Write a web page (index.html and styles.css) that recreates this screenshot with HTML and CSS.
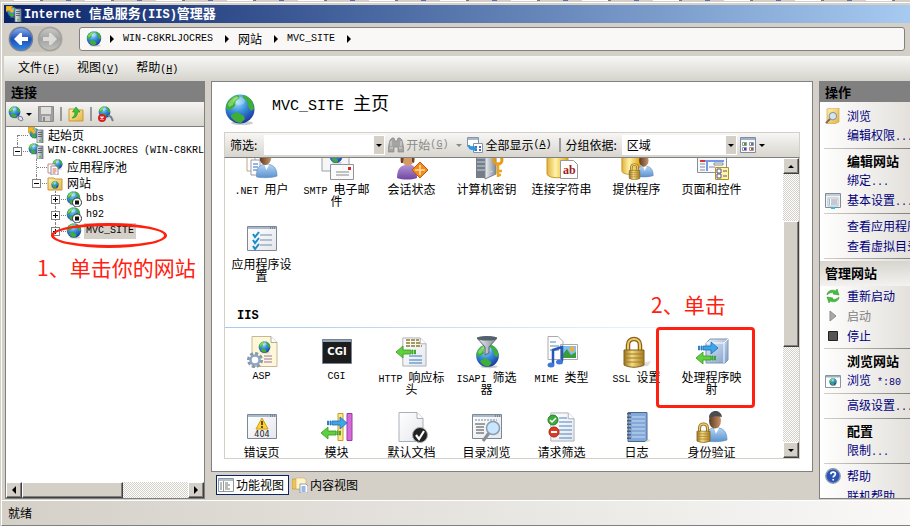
FILE: index.html
```html
<!DOCTYPE html>
<html lang="zh-CN">

<head>
    <meta charset="UTF-8">
    <meta name="viewport" content="width=device-width, initial-scale=1.0">
    <link rel="stylesheet" href="styles.css">
    <title>Internet 信息服务(IIS)管理器</title>
</head>

<body>
    <!-- shared icon shapes -->
    <svg class="sprite" width="0" height="0" aria-hidden="true">
        <defs>
            <radialGradient id="gSea" cx=".4" cy=".25" r=".8">
                <stop offset="0" stop-color="#a5e4ff"/><stop offset=".45" stop-color="#3a8fdc"/><stop offset="1" stop-color="#162f9c"/>
            </radialGradient>
            <linearGradient id="gBack" x2="0" y2="1">
                <stop offset="0" stop-color="#8cb4ee"/><stop offset=".5" stop-color="#1c4db8"/><stop offset="1" stop-color="#2f8ae8"/>
            </linearGradient>
            <linearGradient id="gFwd" x2="0" y2="1">
                <stop offset="0" stop-color="#c9c9c7"/><stop offset=".5" stop-color="#a2a2a0"/><stop offset="1" stop-color="#c2c2c0"/>
            </linearGradient>
            <linearGradient id="gGold"><stop offset="0" stop-color="#e0b040"/><stop offset=".4" stop-color="#fff3a8"/><stop offset="1" stop-color="#e3a412"/></linearGradient>
            <linearGradient id="gFolder" x2="1" y2="1"><stop offset="0" stop-color="#fff0b0"/><stop offset="1" stop-color="#e6b445"/></linearGradient>
            <linearGradient id="gBrass"><stop offset="0" stop-color="#9a7018"/><stop offset=".4" stop-color="#f3dc84"/><stop offset="1" stop-color="#a87a1c"/></linearGradient>
            <linearGradient id="gSteel"><stop offset="0" stop-color="#f2f4f6"/><stop offset="1" stop-color="#7d8894"/></linearGradient>
            <linearGradient id="gBox" x2="1" y2="1"><stop offset="0" stop-color="#e6eef8"/><stop offset="1" stop-color="#7fa0cc"/></linearGradient>
            <linearGradient id="gShirt" x2="0" y2="1"><stop offset="0" stop-color="#b5d5f5"/><stop offset="1" stop-color="#5c92cf"/></linearGradient>
            <linearGradient id="gPurple" x2="0" y2="1"><stop offset="0" stop-color="#b393d8"/><stop offset="1" stop-color="#7046a0"/></linearGradient>
            <linearGradient id="gFace"><stop offset="0" stop-color="#5c3a22"/><stop offset="1" stop-color="#c89468"/></linearGradient>
            <linearGradient id="gPage" x2="1" y2="1"><stop offset="0" stop-color="#fff"/><stop offset="1" stop-color="#e4e7ec"/></linearGradient>
        </defs>
        <symbol id="globe" viewBox="0 0 32 32">
            <ellipse cx="18" cy="29" rx="11" ry="2" fill="#999" opacity=".5"/>
            <circle cx="16" cy="15" r="14.5" fill="url(#gSea)"/>
            <path d="M2 13C3 7 8 2 14 1l2 3-4 3-1 5-5 4-3-1zM19 1c5 1 8 4 10 8l1 6-3 2-3-5-1-5-4-3zM7 21l6-3 7 4 1 3-4 4c-4 0-8-3-10-6z" fill="#3fae35"/>
            <path d="M4 10c2-4 5-7 9-8l1 2-4 3-1 4-4 2z" fill="#8fdc6a" opacity=".8"/>
            <ellipse cx="15" cy="7" rx="6" ry="4" fill="#fff" opacity=".25"/>
        </symbol>
        <symbol id="server" viewBox="0 0 16 16">
            <path d="M9 3h6v13H9z" fill="url(#gSteel)" stroke="#6d7680" stroke-width=".8"/>
            <path d="M10 5.5h4M10 7.5h4M10 9.5h4" stroke="#56606a" stroke-width=".9"/>
            <path d="M11 13h2v1.5h-2z" fill="#4fc22e"/>
        </symbol>
        <symbol id="start" viewBox="0 0 16 16">
            <use href="#globe" x="1" y="1" width="11" height="11"/>
            <path d="M0 0h7l-2 2 3 3-2 2-3-3-3 2z" fill="#f6b82a" stroke="#c78710" stroke-width=".5"/>
            <use href="#server"/>
        </symbol>
        <symbol id="host" viewBox="0 0 16 16"><use href="#globe" width="12" height="12"/><use href="#server"/></symbol>
        <symbol id="pool" viewBox="0 0 16 16">
            <use href="#globe" x="5" width="11" height="11"/>
            <path d="M1 5h7v9H1z" fill="#fff" stroke="#c58a8a"/><path d="M4 7h5l2 2v7H4z" fill="#fff" stroke="#8a919c"/>
            <path d="M5.500 10h4M5.500 12h4M5.500 14h3" stroke="#c33" stroke-width=".8"/>
        </symbol>
        <symbol id="folder" viewBox="0 0 16 16"><path d="M1 3h6l1 1h7v11H1z" fill="url(#gFolder)" stroke="#c79a38"/></symbol>
        <symbol id="sites" viewBox="0 0 16 16"><use href="#folder"/><use href="#globe" x="4" y="6" width="8" height="8"/></symbol>
        <symbol id="stopped" viewBox="0 0 16 16">
            <use href="#globe" width="15" height="15"/>
            <circle cx="11" cy="11.500" r="4.500" fill="#fff" stroke="#333"/><path d="M9 9.500h4v4H9z" fill="#111"/>
        </symbol>
        <symbol id="connect" viewBox="0 0 16 16">
            <use href="#globe" width="13" height="13"/>
            <path d="M8 9l3 3m0-2l3 1 1 3-2 1-3-2z" fill="#dfe6ee" stroke="#71818f"/>
        </symbol>
        <symbol id="disconnect" viewBox="0 0 16 16">
            <use href="#globe" width="13" height="13"/><path d="M10 9l3 2 2 4" fill="none" stroke="#71818f" stroke-width="2"/>
            <circle cx="4" cy="12" r="4" fill="#d22020"/><path d="M2.500 10.500l3 3m0-3l-3 3" stroke="#fff" stroke-width="1.300"/>
        </symbol>
        <symbol id="save" viewBox="0 0 16 16">
            <path d="M.5.5h15v15H.5z" fill="#a0a0a0" stroke="#8a8a8a"/><path d="M3 1h10v7H3z" fill="#e0dfdc"/>
            <path d="M4 10h8v5H4z" fill="#d0cfcb"/><path d="M5 11h2v4H5z" fill="#888"/>
        </symbol>
        <symbol id="folder-up" viewBox="0 0 16 16"><use href="#folder"/><path d="M4 12c2-1 3-3 3-6H4.500L8 1l4 5H9.500c0 4-2 6-5.500 6z" fill="#3cc23c" stroke="#1f8a1f" stroke-width=".6"/></symbol>
        <symbol id="glass" viewBox="0 0 16 16">
            <path d="M6 10l-5 5" stroke="#7a6a60" stroke-width="2.200"/><circle cx="9" cy="7" r="4.200" fill="#cfeaff" fill-opacity=".85" stroke="#8a97a5" stroke-width="1.200"/>
        </symbol>
        <symbol id="folder-find" viewBox="0 0 16 16"><path d="M2 1l5-1h7v14l-5 2H2z" fill="url(#gFolder)" stroke="#c79a38" stroke-width=".6"/><use href="#glass" y="2" width="14" height="14"/></symbol>
        <symbol id="binoculars" viewBox="0 0 16 16">
            <path d="M2 3l2-2h2l1 3h2l1-3h2l2 2 2 9v3h-6v-5H6v5H0v-3z" fill="#a4a4a2" stroke="#888" stroke-width=".7"/>
            <path d="M2 11h3M11 11h3M3 4v5M13 4v5" stroke="#ddd"/>
        </symbol>
        <symbol id="show-all" viewBox="0 0 16 16">
            <path d="M.5.5h11v9H.5z" fill="#fff" stroke="#8495a8"/><path d="M1 1h10v2H1z" fill="#a9b8ca"/>
            <path d="M6.500 6.500h9v9h-9z" fill="#fff" stroke="#8495a8"/><path d="M8 9h2v2H8zM12 9h2v2h-2zM8 12h2v2H8zM12 12h2v2h-2z" fill="#4a62c8"/>
            <path d="M1 8c0 4 2 5 5 5v2l4-3.500L6 8v2c-2 0-3 0-3-2z" fill="#2b9ade"/>
        </symbol>
        <symbol id="tiles" viewBox="0 0 16 16">
            <path d="M.5.5h15v15H.5z" fill="#fafafa" stroke="#7e8ba0"/><path d="M1 1h14v2H1z" fill="#9fb0c5"/>
            <path d="M2.500 5.500h4v3h-4zM9.500 5.500h4v3h-4zM2.500 10.500h4v3h-4zM9.500 10.500h4v3h-4z" fill="#fff" stroke="#999"/>
            <path d="M4 6h2v2H4z" fill="#3a9a3a"/><path d="M11 6h2v2h-2z" fill="#3a7ad0"/><path d="M4 11h2v2H4z" fill="#4343c0"/><path d="M11 11h2v2h-2z" fill="#d44c28"/>
        </symbol>
        <symbol id="list16" viewBox="0 0 16 16">
            <path d="M.5.5h15v14H.5z" fill="#f1f3f6" stroke="#828c98"/><path d="M1 1h14v2H1z" fill="#c4ccd6"/>
            <path d="M3 5h10v8H3z" fill="#fff" stroke="#9aa5b2" stroke-width=".7"/><path d="M4 7h1M4 9h1M4 11h1" stroke="#28a"/><path d="M6 7h6M6 9h6M6 11h6" stroke="#8a94a0"/><path d="M6 14h4v2H6z" fill="#29c0ee"/>
        </symbol>
        <symbol id="features" viewBox="0 0 16 16">
            <path d="M.5 1.500h15v13H.5z" fill="#fff" stroke="#8d97a4"/><path d="M1 2h14v2H1z" fill="#b5bfcc"/><path d="M5.500 4v10" stroke="#999"/>
            <path d="M2 6h2M2 8h2M2 10h2M2 12h2M7 6h3M7 8h5M7 10h3M7 12h5" stroke="#707a70"/>
        </symbol>
        <symbol id="content" viewBox="0 0 16 16">
            <path d="M0 2h5l1 1h6v9H0z" fill="#edc35c" stroke="#bd9038" stroke-width=".6"/><path d="M4 1h8l2 2v9H4z" fill="#fff3c8" stroke="#c9a75a" stroke-width=".6"/>
            <path d="M8 7h6l2 2v7H8z" fill="#fff" stroke="#778ba4" stroke-width=".8"/><path d="M9.500 10h4M9.500 12h4M9.500 14h4" stroke="#3a72be"/>
        </symbol>
        <symbol id="restart" viewBox="0 0 16 16">
            <path d="M2 7c0-4 5-6 9-4l1-2 2 6-6-1 1-1c-3-1-5 0-7 2z" fill="#43bf3c" stroke="#2a8c28" stroke-width=".5"/>
            <path d="M14 9c0 4-5 6-9 4l-1 2-2-6 6 1-1 1c3 1 5 0 7-2z" fill="#43bf3c" stroke="#2a8c28" stroke-width=".5"/>
        </symbol>
        <symbol id="play" viewBox="0 0 16 16"><path d="M5 3l6 5-6 5z" fill="#a9a9a9" stroke="#8c8c8c"/></symbol>
        <symbol id="stop" viewBox="0 0 16 16"><path d="M3.500 3.500h9v9h-9z" fill="#555" stroke="#222"/></symbol>
        <symbol id="browse-web" viewBox="0 0 16 16"><path d="M.5 2.500h15v12H.5z" fill="#fff" stroke="#8a95a3"/><path d="M1 3h14v1.500H1z" fill="#9dadc2"/><use href="#globe" x="4" y="5" width="8" height="8"/></symbol>
        <symbol id="help" viewBox="0 0 16 16">
            <circle cx="8" cy="8" r="7.200" fill="#2c53b6" stroke="#8d99ad" stroke-width="1.400"/>
            <path d="M5.800 6.300c0-3 4.600-2.800 4.600-.2 0 1.600-2.200 1.700-2.200 3.400M8.200 11v1.600" fill="none" stroke="#fff" stroke-width="1.700"/>
        </symbol>
        <symbol id="page" viewBox="0 0 32 32"><path d="M6 1.500h18l6 6v23H6z" fill="url(#gPage)" stroke="#aab0b8"/><path d="M24 1.500v6h6" fill="#fff" stroke="#aab0b8"/></symbol>
        <symbol id="window" viewBox="0 0 32 32"><path d="M1.500 3.500h29v24h-29z" fill="url(#gPage)" stroke="#7d8894"/><path d="M2 4h28v2H2z" fill="#a9bad0"/><path d="M24 5h1M26 5h1M28 5h1" stroke="#48566a"/></symbol>
        <symbol id="lock" viewBox="0 0 32 32">
            <path d="M10 15V9c0-8 12-8 12 0v6" fill="none" stroke="#8a6418" stroke-width="4.500"/><path d="M10 15V9c0-8 12-8 12 0v6" fill="none" stroke="#ebcd6c" stroke-width="2"/>
            <path d="M6 14h20v15c-6 3-14 3-20 0z" fill="url(#gBrass)" stroke="#80601c"/><path d="M6 18h20M6 22h20M6 26h20" stroke="#a07a28"/>
        </symbol>
        <symbol id="user" viewBox="0 0 32 32"><path d="M10 30c-1-9 3-13 8-13h5c6 1 8 6 8 12-5 2-15 2-21 1z" fill="url(#gShirt)" stroke="#5484b8" stroke-width=".6"/><path d="M18 17l2 6 3-6z" fill="#fff"/><ellipse cx="19" cy="9.500" rx="6" ry="8" fill="url(#gFace)"/><path d="M13 7c0-9 12-9 13-1-4-1-9-1-13 1z" fill="#4a4c50"/></symbol>
        <symbol id="woman" viewBox="0 0 32 32"><path d="M1 30c0-8 3-13 9-13h5c5 1 6 7 6 13-6 2-14 2-20 0z" fill="url(#gPurple)"/><ellipse cx="12" cy="10" rx="6" ry="8" fill="#d39a68"/><path d="M5 15C3 6 8 0 14 2c5 1 5 9 4 13l-2-1V9l-8-2-1 8z" fill="#6e4023"/></symbol>
        <symbol id="arrow-left" viewBox="0 0 20 14"><path d="M0 7l7-6v4h8v4H7v4zM16 5h1v4h-1zM18.500 5h1v4h-1z" fill="#62cf3e" stroke="#2d9a1d" stroke-width=".8"/></symbol>
        <symbol id="arrow-right" viewBox="0 0 20 14"><path d="M20 7l-7-6v4H5v4h8v4zM4 5H3v4h1zM1.500 5h-1v4h1z" fill="#3ea5ea" stroke="#1a6fb8" stroke-width=".8"/></symbol>
        <symbol id="database" viewBox="0 0 32 32"><path d="M1 4v22c1 5 20 5 21 0V4z" fill="url(#gGold)" stroke="#c8961c"/><ellipse cx="11.500" cy="4" rx="10.500" ry="3.500" fill="#fff2a8" stroke="#d2a62e"/></symbol>
    </svg>

    <div class="behind"></div>
    <div class="window">
        <header class="title-bar">
            <svg class="icon" viewBox="0 0 16 16"><use href="#start"/></svg>
            <h1><span class="en">Internet </span>信息服务<span class="en">(IIS)</span>管理器</h1>
        </header>

        <div class="nav-bar">
            <div class="nav-buttons">
                <button type="button" aria-label="后退"><svg viewBox="0 0 26 26"><circle cx="13" cy="13" r="11.500" fill="url(#gBack)" stroke="#6e7f9c" stroke-width="1.500"/><path d="M6 13l6-6h2v4h6v4h-6v4h-2z" fill="#fff"/></svg></button>
                <button type="button" aria-label="前进" disabled><svg viewBox="0 0 26 26"><circle cx="13" cy="13" r="11.500" fill="url(#gFwd)" stroke="#a2a19d" stroke-width="1.500"/><path d="M20 13l-6-6h-2v4H6v4h6v4h2z" fill="#dcdbd8"/></svg></button>
            </div>
            <nav class="address">
                <svg class="icon" viewBox="0 0 32 32"><use href="#globe"/></svg>
                <i class="arrow"></i>
                <a href="#" class="en">WIN-C8KRLJOCRES</a>
                <i class="arrow"></i>
                <a href="#">网站</a>
                <i class="arrow"></i>
                <a href="#" class="en">MVC_SITE</a>
                <i class="arrow"></i>
            </nav>
        </div>

        <div class="menu-bar">
            <button type="button">文件<span class="en">(<u>F</u>)</span></button>
            <button type="button">视图<span class="en">(<u>V</u>)</span></button>
            <button type="button">帮助<span class="en">(<u>H</u>)</span></button>
        </div>

        <main>
            <section class="connections">
                <h2>连接</h2>
                <div class="tools">
                    <button type="button" aria-label="连接"><svg class="icon" viewBox="0 0 16 16"><use href="#connect"/></svg><i class="down"></i></button>
                    <button type="button" aria-label="保存" disabled><svg class="icon" viewBox="0 0 16 16"><use href="#save"/></svg></button>
                    <span class="sep"></span>
                    <button type="button" aria-label="向上"><svg class="icon" viewBox="0 0 16 16"><use href="#folder-up"/></svg></button>
                    <span class="sep"></span>
                    <button type="button" aria-label="断开"><svg class="icon" viewBox="0 0 16 16"><use href="#disconnect"/></svg></button>
                </div>
                <ul class="tree">
                    <li><div class="node"><svg class="icon" viewBox="0 0 16 16"><use href="#start"/></svg><span>起始页</span></div></li>
                    <li>
                        <div class="node"><button type="button" class="toggle" aria-label="折叠"></button><svg class="icon" viewBox="0 0 16 16"><use href="#host"/></svg><span class="en">WIN-C8KRLJOCRES (WIN-C8KRLJOCRES\Administrator)</span></div>
                        <ul>
                            <li><div class="node"><svg class="icon" viewBox="0 0 16 16"><use href="#pool"/></svg><span>应用程序池</span></div></li>
                            <li>
                                <div class="node"><button type="button" class="toggle" aria-label="折叠"></button><svg class="icon" viewBox="0 0 16 16"><use href="#sites"/></svg><span>网站</span></div>
                                <ul>
                                    <li><div class="node"><button type="button" class="toggle plus" aria-label="展开"></button><svg class="icon" viewBox="0 0 16 16"><use href="#stopped"/></svg><span class="en">bbs</span></div></li>
                                    <li><div class="node"><button type="button" class="toggle plus" aria-label="展开"></button><svg class="icon" viewBox="0 0 16 16"><use href="#stopped"/></svg><span class="en">h92</span></div></li>
                                    <li><div class="node"><button type="button" class="toggle plus" aria-label="展开"></button><svg class="icon" viewBox="0 0 32 32"><use href="#globe"/></svg><span class="en selected">MVC_SITE</span></div></li>
                                </ul>
                            </li>
                        </ul>
                    </li>
                </ul>
                <div class="scroll-x">
                    <button type="button" aria-label="向左"><i class="arrow back"></i></button>
                    <span class="thumb"></span>
                    <span class="track"></span>
                    <button type="button" aria-label="向右"><i class="arrow"></i></button>
                </div>
                <div class="mark-oval"></div>
                <p class="note note-tree">1、单击你的网站</p>
            </section>

            <section class="center">
                <div class="home">
                    <div class="home-title">
                        <svg viewBox="0 0 32 32"><use href="#globe"/></svg>
                        <h2><span class="en">MVC_SITE </span>主页</h2>
                    </div>
                    <div class="filter">
                        <label for="filter">筛选:</label>
                        <div class="combo combo-filter"><input type="text" id="filter"><button type="button" aria-label="筛选历史"><i class="down"></i></button></div>
                        <button type="button" class="go" disabled><svg class="icon" viewBox="0 0 16 16"><use href="#binoculars"/></svg>开始<span class="en">(<u>G</u>)</span><i class="down"></i></button>
                        <button type="button" class="all"><svg class="icon" viewBox="0 0 16 16"><use href="#show-all"/></svg>全部显示<span class="en">(<u>A</u>)</span></button>
                        <span class="sep"></span>
                        <label for="group">分组依据:</label>
                        <div class="combo combo-group"><select id="group"><option>区域</option></select><span class="drop"><i class="down"></i></span></div>
                        <button type="button" class="views" aria-label="视图"><svg class="icon" viewBox="0 0 16 16"><use href="#tiles"/></svg><i class="down"></i></button>
                    </div>
                    <div class="features">
                        <div class="list">
                            <div class="grid grid-top">
                                <a href="#"><svg viewBox="0 0 32 32"><path d="M1 8h8v15H1z" fill="#fff" stroke="#c0a878"/><path d="M5 12h9v15H5z" fill="#fff" stroke="#99a"/><path d="M7 16h5M7 19h5M7 22h5" stroke="#2c6fc4"/><use href="#user" x="1" width="31" height="31"/></svg><span><span class="en">.NET </span>用户</span></a>
                                <a href="#"><svg viewBox="0 0 32 32"><path d="M1 3h27v20H1z" fill="#f5f6f8" stroke="#9a9fa6"/><use href="#globe" x="8" y="2" width="14" height="14"/><path d="M9.500 16.500h23v15h-23z" fill="#fafafa" stroke="#8f9499"/><path d="M27 19h3v3h-3z" fill="#d22"/><path d="M15 24h13M15 27h13" stroke="#888"/></svg><span><span class="en">SMTP </span>电子邮件</span></a>
                                <a href="#"><svg viewBox="0 0 32 32"><use href="#woman" width="32" height="32"/><path d="M24 14l8 8-8 8-8-8z" fill="#f48a1c" stroke="#c05c08"/><path d="M24 17v10M19 22h10" stroke="#ffe0a0" stroke-width="1.500"/></svg><span>会话状态</span></a>
                                <a href="#"><svg viewBox="0 0 32 32"><path d="M5 2h9v28H5z" fill="#737e88"/><path d="M14 2h11v24l-11 5z" fill="url(#gSteel)" stroke="#79838c"/><path d="M6 10h8M6 14h8M6 18h8M6 22h8M16 25l6-2" stroke="#ccd3da"/><circle cx="27" cy="12" r="4" fill="none" stroke="#e89b18" stroke-width="3"/><path d="M27 16v13M27 23h4M27 27h3" stroke="#eda41c" stroke-width="2.500"/></svg><span>计算机密钥</span></a>
                                <a href="#"><svg viewBox="0 0 32 32"><use href="#database" width="32" height="32"/><path d="M14.500 12.500h13l4 4v14h-17z" fill="#fff" stroke="#999"/><text x="17" y="26" class="glyph-ab">ab</text></svg><span>连接字符串</span></a>
                                <a href="#"><svg viewBox="0 0 32 32"><use href="#database" width="28" height="29"/><use href="#user" x="8" y="5" width="25" height="25"/><use href="#lock" x="5" y="15" width="17" height="17"/></svg><span>提供程序</span></a>
                                <a href="#"><svg viewBox="0 0 32 32"><path d="M1.500 1.500h29v23h-29z" fill="#f8f9fc" stroke="#85909e"/><path d="M4 13h5" stroke="#d33" stroke-width="2"/><path d="M9 13h19M11 14v9" stroke="#447be0" stroke-width="1.500"/><path d="M4 16h5M4 19h5M4 22h5M13 19h6" stroke="#889"/><path d="M18 15h9v2h-9z" fill="#fff" stroke="#889"/><path d="M19.500 19.500h13v12h-13z" fill="#fff3a4" stroke="#ad9624"/><path d="M21 21h4v4h-4zM21 26h4v4h-4zM27 23h4M27 28h4" fill="#fff" stroke="#558"/></svg><span>页面和控件</span></a>
                                <a href="#"><svg viewBox="0 0 32 32"><use href="#window" width="32" height="32"/><path d="M7 11l2 3 4-5M7 17l2 3 4-5M7 23l2 3 4-5" fill="none" stroke="#168acc" stroke-width="2"/><path d="M14 12h12M14 17h12M14 22h12" stroke="#778da5"/></svg><span>应用程序设置</span></a>
                            </div>
                            <h3 class="en">IIS</h3>
                            <div class="grid">
                                <a href="#"><svg viewBox="0 0 32 32"><path d="M6 .5h19l6 6v24H6z" fill="#fff7d8" stroke="#c3b997"/><path d="M25 .5v6h6" fill="#fff" stroke="#aaa"/><use href="#globe" x="12" y="5" width="13" height="13"/><path d="M18 20h8M18 23h8M18 26h8" stroke="#9577a8"/><circle cx="9" cy="24" r="6.500" fill="none" stroke="#8798aa" stroke-width="3" stroke-dasharray="3 2"/><circle cx="9" cy="24" r="4.500" fill="#fff" stroke="#8ba6c4" stroke-width="2.500"/></svg><span class="en">ASP</span></a>
                                <a href="#"><svg viewBox="0 0 32 32"><path d="M1.500 3.500h29v24h-29z" fill="#1c1c1c" stroke="#778391"/><path d="M2 4h28v2H2z" fill="#93a4b8"/><text x="16" y="19" text-anchor="middle" class="glyph-cgi">CGI</text></svg><span class="en">CGI</span></a>
                                <a href="#"><svg viewBox="0 0 32 32"><use href="#page" x="1" width="31" height="32"/><path d="M10 4h13M10 7h15M10 10h16" stroke="#8d7a28" stroke-width="1.500" stroke-dasharray="4 1"/><path d="M13 20h13M13 24h13M13 27h13" stroke="#347ac0"/><use href="#arrow-left" y="9" width="20" height="14"/></svg><span><span class="en">HTTP </span>响应标头</span></a>
                                <a href="#"><svg viewBox="0 0 32 32"><use href="#globe" x="4" y="8" width="25" height="25"/><path d="M6 2c4-2 16-2 20 0l-8 9v6l-4 2v-8z" fill="url(#gSteel)" stroke="#58656f"/><ellipse cx="16" cy="2.500" rx="10" ry="2" fill="#54616c"/></svg><span><span class="en">ISAPI </span>筛选器</span></a>
                                <a href="#"><svg viewBox="0 0 32 32"><path d="M2 .5h10l5 5v18H2z" fill="#fff" stroke="#aaa"/><path d="M4 6h6M4 10h9M4 14h9" stroke="#58a"/><path d="M14.500 8.500h17v15h-17z" fill="#fff" stroke="#aaa"/><path d="M16 10h14v12H16z" fill="#7fc0f0"/><path d="M16 22v-3l5-6 4 6 5-3v6z" fill="#3c9c3c"/><circle cx="26" cy="13" r="2.500" fill="#f3ae30"/><path d="M7 28V14l9-3v14" fill="none" stroke="#2758b8" stroke-width="2.500"/><ellipse cx="5" cy="29" rx="3.500" ry="2.500" fill="#3c78d8"/><ellipse cx="13.500" cy="26" rx="3.500" ry="2.500" fill="#3c78d8"/></svg><span><span class="en">MIME </span>类型</span></a>
                                <a href="#"><svg viewBox="0 0 32 32"><path d="M22 27l8-2-3 5-8 1z" fill="#ddd"/><use href="#lock" x="-3" width="32" height="32"/></svg><span><span class="en">SSL </span>设置</span></a>
                                <a href="#"><svg viewBox="0 0 32 32"><path d="M10 7l4-4h18v21l-3 3H10z" fill="url(#gBox)" stroke="#8194ad"/><path d="M10 7h18v20M28 7l4-4" fill="none" stroke="#fff"/><use href="#arrow-right" x="2" y="5" width="20" height="14"/><use href="#arrow-left" y="15" width="20" height="14"/></svg><span>处理程序映射</span></a>
                                <a href="#"><svg viewBox="0 0 32 32"><use href="#window" width="32" height="32"/><path d="M16 7l6 11H10z" fill="#ffd42a" stroke="#d29a10"/><path d="M16 10v4M16 15v2" stroke="#222" stroke-width="1.500"/><text x="16" y="26" text-anchor="middle" class="glyph-404">404</text></svg><span>错误页</span></a>
                                <a href="#"><svg viewBox="0 0 32 32"><path d="M17 2.500h5v27h-5z" fill="#ffe78c" stroke="#c79b22"/><path d="M26 2.500h5v27h-5z" fill="#d46ad8" stroke="#9a3aa4"/><use href="#arrow-right" x="6" y="5" width="20" height="14"/><use href="#arrow-left" y="15" width="20" height="14"/></svg><span>模块</span></a>
                                <a href="#"><svg viewBox="0 0 32 32"><use href="#page" x="-3" width="32" height="32"/><circle cx="24" cy="24" r="7.500" fill="#222" stroke="#aaa"/><path d="M20 24l3 4 5-8" fill="none" stroke="#fff" stroke-width="2.200"/></svg><span>默认文档</span></a>
                                <a href="#"><svg viewBox="0 0 32 32"><use href="#window" width="32" height="32"/><path d="M4 9h22" stroke="#b9bfc6" stroke-width="2" stroke-dasharray="2 1"/><path d="M4 13h10M5 16h8M5 19h8M5 22h8" stroke="#444"/><path d="M18 22l-6 8" stroke="#888e96" stroke-width="3"/><circle cx="22" cy="17" r="6.500" fill="#c8e6ff" stroke="#8d9db0" stroke-width="1.500"/></svg><span>目录浏览</span></a>
                                <a href="#"><svg viewBox="0 0 32 32"><use href="#page" x="-1" width="31" height="32"/><path d="M13 7h8M13 11h13M13 15h13M13 19h13M13 23h13M13 27h13" stroke="#4a83c4"/><circle cx="7" cy="9" r="5" fill="#3cab3c" stroke="#268226"/><path d="M4 9l2 2 4-4" fill="none" stroke="#fff" stroke-width="1.500"/><circle cx="8" cy="21" r="5" fill="#dd3c20" stroke="#a82412"/><path d="M5 21h6" stroke="#fff" stroke-width="2"/></svg><span>请求筛选</span></a>
                                <a href="#"><svg viewBox="0 0 32 32"><path d="M25 28l5 1-3 2H12z" fill="#ddd"/><path d="M7 1.500h19v27l-2 2H7z" fill="#84a9d8" stroke="#4a6896"/><path d="M11 6h13M11 10h13M11 14h13M11 18h13M11 22h13M11 26h13" stroke="#c8dcf3"/><path d="M8 2v28" stroke="#555f6c" stroke-width="4" stroke-dasharray="1.500 2"/></svg><span>日志</span></a>
                                <a href="#"><svg viewBox="0 0 32 32"><use href="#user" width="32" height="32"/><use href="#lock" x="-3" y="11" width="21" height="21"/></svg><span>身份验证</span></a>
                            </div>
                        </div>
                        <div class="scroll-y">
                            <button type="button" aria-label="向上"><i class="down up"></i></button>
                            <span class="track track-top"></span>
                            <span class="thumb"></span>
                            <span class="track track-bottom"></span>
                            <button type="button" aria-label="向下"><i class="down"></i></button>
                        </div>
                    </div>
                    <p class="note note-grid">2、单击</p>
                    <div class="mark-box"></div>
                </div>
                <div class="view-tabs">
                    <button type="button" class="active"><svg class="icon" viewBox="0 0 16 16"><use href="#features"/></svg>功能视图</button>
                    <button type="button"><svg class="icon" viewBox="0 0 16 16"><use href="#content"/></svg>内容视图</button>
                </div>
            </section>

            <aside class="actions">
                <h2>操作</h2>
                <ul>
                    <li><svg class="icon" viewBox="0 0 16 16"><use href="#folder-find"/></svg><a href="#">浏览</a></li>
                    <li><a href="#">编辑权限<span class="en">...</span></a></li>
                </ul>
                <hr>
                <h4>编辑网站</h4>
                <ul>
                    <li><a href="#">绑定<span class="en">...</span></a></li>
                    <li><svg class="icon" viewBox="0 0 16 16"><use href="#list16"/></svg><a href="#">基本设置<span class="en">...</span></a></li>
                </ul>
                <hr>
                <ul>
                    <li><a href="#">查看应用程序</a></li>
                    <li><a href="#">查看虚拟目录</a></li>
                </ul>
                <hr>
                <h3>管理网站</h3>
                <ul>
                    <li><svg class="icon" viewBox="0 0 16 16"><use href="#restart"/></svg><a href="#">重新启动</a></li>
                    <li><svg class="icon" viewBox="0 0 16 16"><use href="#play"/></svg><a class="off">启动</a></li>
                    <li><svg class="icon" viewBox="0 0 16 16"><use href="#stop"/></svg><a href="#">停止</a></li>
                </ul>
                <hr>
                <h4>浏览网站</h4>
                <ul>
                    <li><svg class="icon" viewBox="0 0 16 16"><use href="#browse-web"/></svg><a href="#">浏览<span class="en"> *:80</span></a></li>
                </ul>
                <hr>
                <ul>
                    <li><a href="#">高级设置<span class="en">...</span></a></li>
                </ul>
                <hr>
                <h4>配置</h4>
                <ul>
                    <li><a href="#">限制<span class="en">...</span></a></li>
                </ul>
                <hr>
                <ul>
                    <li><svg class="icon" viewBox="0 0 16 16"><use href="#help"/></svg><a href="#">帮助</a></li>
                    <li><a href="#">联机帮助</a></li>
                </ul>
            </aside>
        </main>

        <footer>就绪</footer>
    </div>
</body>

</html>
```

FILE: styles.css
```css
* {
    box-sizing: border-box;
    margin: 0;
    padding: 0;
}

body {
    display: flex;
    flex-direction: column;
    height: 100vh;
    overflow: hidden;
    background-color: #d4d0c8;
    color: #000;
    font-family: "Noto Sans CJK SC", sans-serif;
    font-size: 12px;
    line-height: 16px;
}

button,
input,
select {
    border: none;
    background: none;
    color: inherit;
    font: inherit;
}

ul {
    list-style: none;
}

a {
    color: inherit;
    text-decoration: none;
}

/* latin text runs at half the width of a chinese character */
.en {
    font-family: "Liberation Mono", monospace;
    font-size: 10px;
    white-space: pre;
}

.sprite {
    position: absolute;
}

.icon {
    flex: none;
    display: block;
    width: 16px;
    height: 16px;
}

.arrow {
    flex: none;
    border: 4px solid transparent;
    border-left-color: #000;
    border-right: none;
}

.arrow.back {
    border-right: 4px solid #000;
    border-left: none;
}

.down {
    flex: none;
    border: 3px solid transparent;
    border-top-color: #000;
    border-bottom: none;
}

.down.up {
    border-top: none;
    border-bottom: 3px solid #000;
}

.sep {
    flex: none;
    width: 2px;
    height: 14px;
    background-color: #999;
}

.behind {
    height: 1px;
    background: repeating-linear-gradient(90deg, #d4d0c8 0 14px, #fff 14px 40px, #777 40px 43px, #d4d0c8 43px 66px, #5a6fae 66px 71px);
}

.window {
    flex: 1;
    min-height: 0;
    display: flex;
    flex-direction: column;
    margin: 1px 0 0 1px;
    padding-top: 2px;
    border-top: 1px solid #fff;
    border-left: 1px solid #fff;
    border-bottom: 1px solid #808080;
}

.title-bar {
    display: flex;
    align-items: center;
    height: 18px;
    margin-left: 2px;
    padding-left: 2px;
    gap: 2px;
    background: linear-gradient(90deg, #0a246a, #a6caf0);
    color: #fff;
}

.title-bar h1 {
    font-size: 13px;
}

.title-bar .en {
    font-size: 12px;
}

.nav-bar {
    display: flex;
    align-items: center;
    height: 33px;
    padding: 0 5px 2px 6px;
    gap: 16px;
}

.nav-buttons {
    display: flex;
    gap: 3px;
    height: 26px;
    border-radius: 13px;
    background-color: #c8c4bc;
}

.nav-buttons button {
    width: 26px;
    height: 26px;
}

.address {
    flex: 1;
    display: flex;
    align-items: center;
    height: 24px;
    padding-left: 6px;
    border: 1px solid #808080;
    border-radius: 3px;
    background-color: #f9f8f7;
}

.address .arrow {
    margin: 0 9px;
}

.address .icon + .arrow {
    margin-left: 8px;
}

.address a {
    margin-right: 3px;
}

.menu-bar {
    display: flex;
    align-items: center;
    height: 25px;
    margin-left: 2px;
    padding-left: 14px;
    gap: 17px;
    background: linear-gradient(#f7f7f5, #d6d3cc);
}

main {
    flex: 1;
    min-height: 0;
    display: flex;
    gap: 6px;
    padding: 0 0 1px 3px;
}

.connections {
    position: relative;
    flex: none;
    display: flex;
    flex-direction: column;
    width: 200px;
    border: 1px solid #808080;
    background-color: #fff;
}

.connections > h2,
.actions > h2 {
    flex: none;
    height: 20px;
    padding-left: 5px;
    background-color: #808080;
    font-size: 13px;
    line-height: 20px;
}

.tools {
    flex: none;
    display: flex;
    align-items: center;
    height: 25px;
    padding-left: 2px;
    gap: 6px;
    border-bottom: 1px solid #808080;
    background: linear-gradient(#f5f4f2, #d8d5ce);
}

.tools button {
    display: flex;
    align-items: center;
    gap: 2px;
}

.tree {
    flex: 1;
    min-height: 0;
    overflow: hidden;
}

.tree ul {
    margin-left: 19px;
}

.tree li {
    position: relative;
}

/* dotted guide lines between the nodes */
.tree li::before {
    content: "";
    position: absolute;
    top: 0;
    bottom: 0;
    left: 11px;
    border-left: 1px dotted #808080;
}

.tree li:last-child::before {
    bottom: auto;
    height: 8px;
}

.tree > li:first-child::before {
    top: 8px;
}

.node {
    position: relative;
    display: flex;
    align-items: center;
    height: 16px;
    padding-left: 22px;
    white-space: nowrap;
}

.node::before {
    content: "";
    position: absolute;
    top: 8px;
    left: 12px;
    width: 10px;
    border-top: 1px dotted #808080;
}

.node > span {
    padding: 0 2px;
    margin-left: 2px;
}

.node .selected {
    background-color: #d4d0c8;
}

.toggle {
    position: absolute;
    left: 7px;
    top: 4px;
    width: 9px;
    height: 9px;
    border: 1px solid #808080;
    background: linear-gradient(#000, #000) center / 5px 1px no-repeat, #fff;
}

.toggle.plus {
    background: linear-gradient(#000, #000) center / 5px 1px no-repeat, linear-gradient(#000, #000) center / 1px 5px no-repeat, #fff;
}

.scroll-x,
.scroll-y {
    flex: none;
    display: flex;
}

.scroll-x {
    height: 16px;
}

.scroll-y {
    flex-direction: column;
    width: 16px;
}

.scroll-x button,
.scroll-y button,
.thumb {
    flex: none;
    display: flex;
    align-items: center;
    justify-content: center;
    width: 16px;
    height: 16px;
    border: 1px solid #fff;
    border-right-color: #404040;
    border-bottom-color: #404040;
    background-color: #d4d0c8;
    box-shadow: inset -1px -1px #808080;
}

.scroll-x .thumb {
    width: 101px;
}

.scroll-y .thumb {
    height: 126px;
}

.track {
    flex: 1;
    background: repeating-conic-gradient(#d4d0c8 0 25%, #fff 0 50%) 0 0 / 2px 2px;
}

.track-top {
    flex: 47;
}

.track-bottom {
    flex: 95;
}

.note {
    position: absolute;
    color: #ff2010;
    font-size: 21px;
    line-height: 28px;
    white-space: nowrap;
}

.note-tree {
    left: 31px;
    top: 171px;
}

.mark-oval {
    position: absolute;
    left: 45px;
    top: 141px;
    width: 116px;
    height: 25px;
    border: 3px solid #ff2010;
    border-radius: 50%;
}

.center {
    flex: 1;
    min-width: 0;
    display: flex;
    flex-direction: column;
}

.home {
    position: relative;
    flex: 1;
    min-height: 0;
    display: flex;
    flex-direction: column;
    padding: 0 12px 12px;
    border: 1px solid #808080;
    background-color: #fff;
}

.home-title {
    flex: none;
    display: flex;
    align-items: center;
    height: 50px;
    gap: 16px;
}

.home-title svg {
    width: 32px;
    height: 32px;
    margin-top: 6px;
}

.home-title h2 {
    font-size: 18px;
    font-weight: 400;
    line-height: 24px;
    padding-bottom: 6px;
}

.home-title .en {
    font-size: 15px;
}

.filter {
    flex: none;
    display: flex;
    align-items: center;
    height: 26px;
    padding-left: 5px;
    border: 1px solid #d4d0c8;
    border-bottom-color: #808080;
    background: linear-gradient(#f7f6f5, #d8d5ce);
    white-space: nowrap;
}

.filter > button {
    display: flex;
    align-items: center;
}

.combo {
    display: flex;
    height: 20px;
    border: 1px solid #fff;
    background-color: #fff;
}

.combo input,
.combo select {
    flex: 1;
    min-width: 0;
    padding-left: 4px;
    appearance: none;
    outline: none;
}

.combo button,
.drop {
    display: flex;
    align-items: center;
    justify-content: center;
    width: 10px;
    background-color: #d4d0c8;
}

.combo-filter {
    width: 121px;
    margin: 0 3px 0 7px;
}

.combo-group {
    width: 115px;
    margin: 0 3px 0 5px;
}

.go {
    color: #8a8a86;
}

.go .icon,
.all .icon {
    margin-right: 2px;
}

.go .down {
    margin: 0 5px 0 8px;
    border-top-color: #8a8a86;
}

.all {
    margin-right: 8px;
}

.filter .sep {
    margin-right: 4px;
}

.views {
    gap: 3px;
}

.features {
    flex: 1;
    min-height: 0;
    display: flex;
    border: 1px solid #d4d0c8;
    border-top: none;
}

/* the list is scrolled a little way down */
.list {
    flex: 1;
    min-width: 0;
    overflow: hidden;
}

.grid {
    display: grid;
    grid-template-columns: repeat(7, 75px);
    grid-auto-rows: 75px;
}

.grid-top {
    margin-top: -10px;
}

.grid a {
    display: flex;
    flex-direction: column;
    align-items: center;
    gap: 3px;
    padding: 0 4px 0 2px;
    line-height: 12px;
    text-align: center;
}

/* keeps a mixed line as tall as a chinese one */
.grid span .en {
    line-height: 1px;
}

.grid svg {
    flex: none;
    width: 32px;
    height: 32px;
    overflow: visible;
}

.glyph-ab {
    fill: #a01c1c;
    font: bold 12px "Liberation Serif", serif;
}

.glyph-cgi {
    fill: #fff;
    font: bold 10px "DejaVu Sans", sans-serif;
}

.glyph-404 {
    fill: #222;
    font: 8px "DejaVu Sans", sans-serif;
}

.list h3 {
    height: 30px;
    margin-bottom: 8px;
    padding: 10px 0 0 12px;
    border-bottom: 1px solid;
    border-image: linear-gradient(90deg, #a6caf0, #fff) 1;
    font-size: 12px;
}

.note-grid {
    left: 439px;
    top: 208px;
}

.mark-box {
    position: absolute;
    left: 444px;
    top: 245px;
    width: 99px;
    height: 81px;
    border: 3px solid #ff2010;
    border-radius: 4px;
}

.view-tabs {
    flex: none;
    display: flex;
    align-items: center;
    height: 27px;
    padding: 0 5px 2px;
    gap: 1px;
}

.view-tabs button {
    display: flex;
    align-items: center;
    height: 20px;
    padding: 0 4px 0 1px;
    gap: 2px;
    border: 1px solid transparent;
}

.view-tabs .active {
    border-color: #0a246a;
    background-color: #fff;
}

.actions {
    flex: none;
    width: 91px;
    overflow: hidden;
    border: 1px solid #808080;
    border-right: none;
    background: linear-gradient(90deg, #fff, #e4e1dc);
    color: #00007b;
    white-space: nowrap;
}

.actions h2,
.actions h3,
.actions h4 {
    color: #000;
    font-size: 13px;
}

.actions > h2 {
    margin-bottom: 4px;
}

.actions h3 {
    height: 25px;
    padding-left: 5px;
    background: linear-gradient(#d8d5ce, #f3f2f0);
    line-height: 24px;
}

.actions h4 {
    padding-left: 27px;
    line-height: 20px;
}

.actions li {
    display: flex;
    align-items: center;
    height: 20px;
    padding-left: 5px;
}

.actions li a {
    margin-left: 6px;
}

.actions li a:first-child {
    margin-left: 22px;
}

.actions .off {
    color: #808080;
}

.actions hr {
    height: 1px;
    margin: 2px 0 2px 4px;
    border: none;
    background: linear-gradient(90deg, #d4d0c8, #808080);
}

footer {
    flex: none;
    height: 25px;
    padding-left: 6px;
    border-top: 1px solid #fff;
    background: linear-gradient(90deg, #d4d0c8, #f9f8f7);
    line-height: 23px;
}
```
